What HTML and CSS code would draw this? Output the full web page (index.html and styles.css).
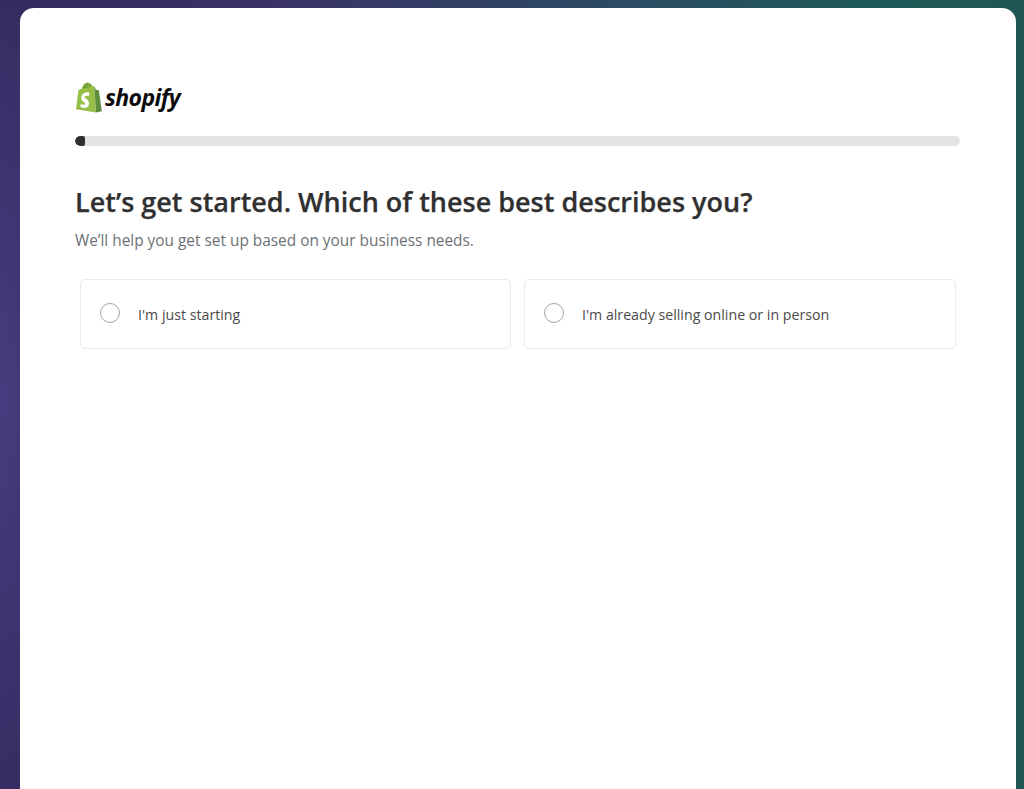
FILE: index.html
```html
<!DOCTYPE html>
<html lang="en">
<head>
<meta charset="utf-8">
<title>Shopify</title>
<link rel="stylesheet" href="styles.css">
</head>
<body>
<main class="card">
  <div class="logo">
    <svg class="bag" viewBox="0 0 27 31" width="27" height="31" aria-hidden="true">
      <path fill="#95bf47" d="M1 27.2 3.4 8.6c.1-.6.3-.8.9-1l2.4-.7C7.5 3.700 9.600.5 12.600.5c.9 0 1.500.3 2 .9 1.600-.1 2.600 1.400 3.100 3.100l1.600-.5L21 30.600Z"/>
      <path fill="#5e8e3e" d="M19.300 4 21 30.600l5.900-1.300S24 8.900 23.900 8.500c-.1-.4-.3-.5-.6-.6l-2.400-.2-1.600-3.700Z"/>
      <path fill="#95bf47" d="M9 6.100c.7-2.200 2-3.900 3.400-4.300C11 1.400 9.200 3.400 8.300 6.300Zm3.800-1.200c0-1.100-.2-2.100-.5-2.800C11.300 2.700 10.400 4 10 5.700Zm1.200-.4 1.900-.6C15.500 2.900 14.800 2 14 1.900c.3.800.4 1.800.4 2.700Z" stroke="#5e8e3e" stroke-width=".7"/>
      <path fill="#fff" transform="translate(-2.500 -2) scale(1.120)" d="m15.200 11.500-.8 3s-.9-.4-2-.4c-1.600.1-1.600 1.100-1.600 1.400.1 1.400 3.700 1.700 3.900 5 .2 2.600-1.400 4.400-3.600 4.500-2.700.2-4.100-1.400-4.100-1.400l.6-2.400s1.500 1.100 2.600 1c.8 0 1.100-.7 1-1.100-.1-1.800-3.100-1.700-3.300-4.800-.2-2.500 1.500-5.100 5.100-5.300 1.400-.1 2.200.5 2.200.5Z"/>
    </svg>
    <span class="wordmark">shopify</span>
  </div>
  <div class="progress"><div class="progress-fill"></div></div>
  <h1 class="title">Let’s get started. Which of these best describes you?</h1>
  <p class="subtitle">We’ll help you get set up based on your business needs.</p>
  <div class="options">
    <label class="option"><span class="radio"></span><span class="option-text">I'm just starting</span></label>
    <label class="option"><span class="radio"></span><span class="option-text">I'm already selling online or in person</span></label>
  </div>
</main>
</body>
</html>
```
FILE: styles.css
```css
* { box-sizing: border-box; }
html, body { height: 100%; }
body {
  margin: 0;
  height: 789px;
  overflow: hidden;
  padding: 8px 8px 0 20px;
  font-family: "Open Sans", "Noto Sans", sans-serif;
  background:
    radial-gradient(ellipse 80px 480px at 0 400px, #483c80 0%, rgba(72,60,128,0) 100%),
    linear-gradient(90deg, #312a5c 0%, #3a3166 25%, #2b4a63 60%, #1f5a58 85%, #1f5653 100%);
}
.card {
  height: 800px;
  background: #fff;
  border-radius: 14px;
  padding: 73px 56px 0 55px;
}
.logo {
  display: flex;
  align-items: center;
  gap: 3px;
  height: 32px;
}
.bag { display: block; flex: none; }
.wordmark {
  font-family: "Open Sans", sans-serif;
  font-size: 23px;
  font-weight: 700;
  font-style: italic;
  letter-spacing: -0.6px;
  color: #0b0b0b;
  line-height: 32px;
}
.progress {
  margin-top: 23px;
  height: 10px;
  border-radius: 5px;
  background: #e4e4e4;
  overflow: hidden;
}
.progress-fill {
  width: 10px;
  height: 100%;
  background: #303030;
  border-radius: 5px 2px 2px 5px;
}
.title {
  margin: 36px 0 0;
  font-size: 27px;
  line-height: 40px;
  font-weight: 600;
  color: #303030;
  -webkit-text-stroke: 0.25px #303030;
}
.subtitle {
  margin: 8px 0 0;
  font-size: 15.400px;
  line-height: 22px;
  color: #6d7175;
}
.options {
  display: grid;
  grid-template-columns: 431fr 432fr;
  gap: 13px;
  margin-top: 27px;
  padding: 0 4px 0 5px;
}
.option {
  display: flex;
  align-items: center;
  gap: 18px;
  height: 70px;
  padding: 0 19px;
  border: 1px solid #ebebeb;
  border-radius: 5px;
  background: #fff;
}
.radio {
  width: 20px;
  height: 20px;
  flex: none;
  border: 1.500px solid #a0a0a0;
  border-radius: 50%;
  margin-top: -2px;
}
.option-text {
  font-size: 14.200px;
  line-height: 20px;
  color: #4a4a4a;
  margin-top: 1px;
}
```
